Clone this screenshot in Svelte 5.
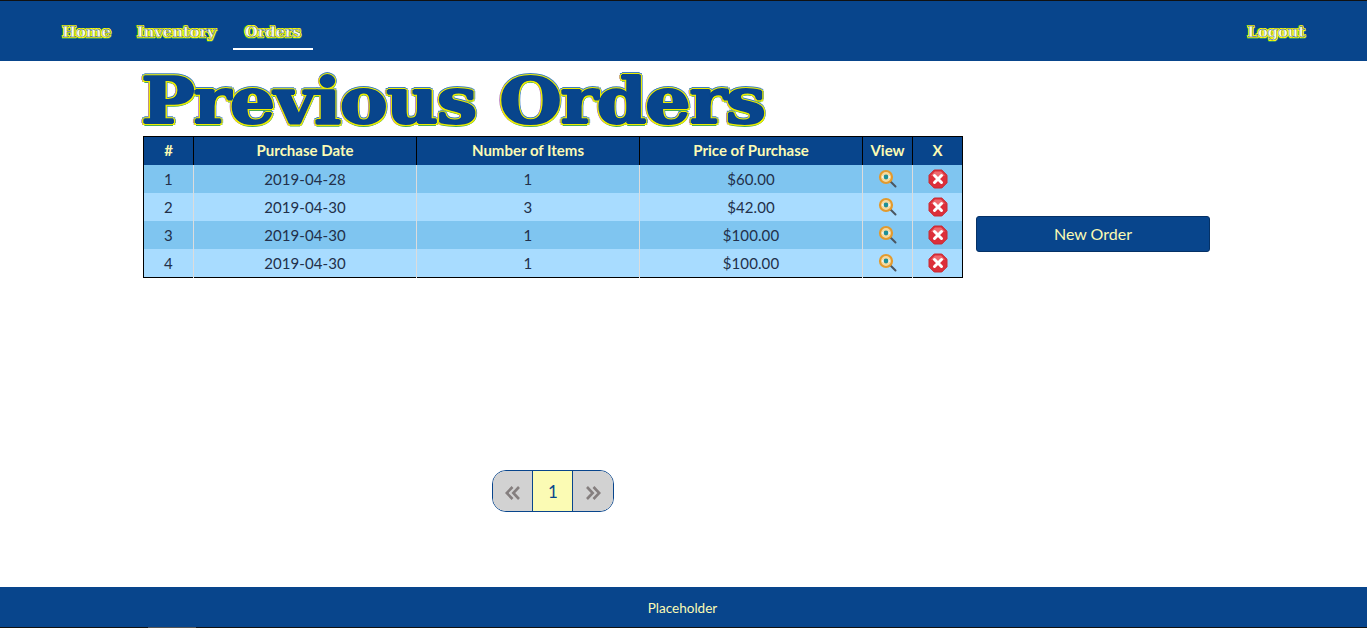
<script>
  const rows = [
    { n: 1, date: '2019-04-28', items: 1, price: '$60.00' },
    { n: 2, date: '2019-04-30', items: 3, price: '$42.00' },
    { n: 3, date: '2019-04-30', items: 1, price: '$100.00' },
    { n: 4, date: '2019-04-30', items: 1, price: '$100.00' }
  ];
</script>

<div class="page">
  <nav class="nav">
    <div class="links">
      <a class="link">Home</a>
      <a class="link">Inventory</a>
      <a class="link active">Orders</a>
    </div>
    <a class="link logout">Logout</a>
  </nav>

  <main class="main">
    <h1 class="title">Previous Orders</h1>
    <div class="content">
      <table class="table">
        <thead>
          <tr>
            <th class="c-n">#</th>
            <th class="c-w">Purchase Date</th>
            <th class="c-w">Number of Items</th>
            <th class="c-w">Price of Purchase</th>
            <th class="c-i">View</th>
            <th class="c-i">X</th>
          </tr>
        </thead>
        <tbody>
          {#each rows as r}
            <tr>
              <td>{r.n}</td>
              <td>{r.date}</td>
              <td>{r.items}</td>
              <td>{r.price}</td>
              <td>
                <svg class="icon" width="20" height="20" viewBox="0 0 20 20">
                  <path d="M12.5 12.5 L17.5 17.5" stroke="#4a5560" stroke-width="2" stroke-linecap="round" />
                  <circle cx="8" cy="8" r="6" fill="#f4d9a0" stroke="#e39a2d" stroke-width="2.2" />
                  <path d="M3.5 8 Q8 3.8 12.5 8 Q8 12 3.5 8Z" fill="#fff" />
                  <circle cx="8" cy="8" r="2.4" fill="#1f8f95" />
                </svg>
              </td>
              <td>
                <svg class="icon" width="20" height="20" viewBox="0 0 20 20">
                  <path d="M6.2 1H13.8L19 6.2V13.8L13.8 19H6.2L1 13.8V6.2Z" fill="#dc2f3a" stroke="#c92a33" stroke-width="1" stroke-linejoin="round" />
                  <path d="M3 6.5 L7 2.5 H13 L17 6.5 Q10 9 3 6.5Z" fill="#ee6a6f" />
                  <path d="M6.5 6.5 L13.5 13.5 M13.5 6.5 L6.5 13.5" stroke="#fff" stroke-width="3" stroke-linecap="round" />
                </svg>
              </td>
            </tr>
          {/each}
        </tbody>
      </table>
      <button class="new-order">New Order</button>
    </div>

    <div class="pager">
      <span class="page-btn side first">
        <svg width="16" height="16" viewBox="0 0 16 16" fill="none" stroke="#857f7f" stroke-width="2.6">
          <path d="M7.5 2 L1.8 8 L7.5 14 M14 2 L8.3 8 L14 14" />
        </svg>
      </span>
      <span class="page-btn current">1</span>
      <span class="page-btn side">
        <svg width="16" height="16" viewBox="0 0 16 16" fill="none" stroke="#857f7f" stroke-width="2.6">
          <path d="M2 2 L7.7 8 L2 14 M8.5 2 L14.2 8 L8.5 14" />
        </svg>
      </span>
    </div>
  </main>

  <footer class="footer">
    <span>Placeholder</span>
    <i class="edge"></i>
  </footer>
</div>

<style>
  :global(body) {
    margin: 0;
    background: #fff;
  }
  .page {
    height: 628px;
    display: flex;
    flex-direction: column;
    overflow: hidden;
    font-family: "Lato", "Open Sans", sans-serif;
  }
  .nav {
    height: 60px;
    border-top: 1px solid #111;
    background: #08458c;
    display: flex;
    justify-content: space-between;
    align-items: flex-start;
    padding: 0 50px 0 51px;
    box-sizing: content-box;
  }
  .links {
    display: flex;
    gap: 4px;
  }
  .link {
    font-family: "DejaVu Serif", serif;
    font-weight: 700;
    font-size: 15px;
    color: #fbfcec;
    -webkit-text-stroke: 0.35px #0c3f70;
    text-shadow: 1px 0 0 #ffff00, -1px 0 0 #ffff00, 0 1px 0 #ffff00, 0 -1px 0 #ffff00,
      0.8px 0.8px 0 #ffff00, -0.8px -0.8px 0 #ffff00, 0.8px -0.8px 0 #ffff00, -0.8px 0.8px 0 #ffff00,
      1.8px 0.8px 0 #2f8a70, -1.8px -0.8px 0 #2f8a70, 0.8px 1.8px 0 #2f8a70, -0.8px 1.8px 0 #2f8a70;
    padding: 15px 11px 0;
    height: 49px;
    box-sizing: border-box;
    border-bottom: 2px solid transparent;
    display: flex;
    align-items: center;
    letter-spacing: -0.2px;
  }
  .link.active {
    border-bottom-color: #fff;
    margin-left: 2px;
    padding-left: 12px;
    padding-right: 12px;
  }
  .logout {
    padding-right: 12px;
  }
  .main {
    flex: 1;
    padding-left: 143px;
    min-height: 0;
  }
  .title {
    margin: 0 0 0 -2px;
    height: 75px;
    line-height: 79px;
    font-family: "DejaVu Serif", serif;
    font-weight: 700;
    font-size: 64px;
    letter-spacing: -1.3px;
    color: #08458c;
    white-space: nowrap;
    transform: scaleX(1.12);
    transform-origin: left center;
    text-shadow: 1px 0 0 #08458c, -1px 0 0 #08458c, 0 1px 0 #08458c, 0 -1px 0 #08458c,
      2px 0 0 #ecec00, -2px 0 0 #ecec00, 0 2px 0 #ecec00, 0 -2px 0 #ecec00,
      1.5px 1.5px 0 #ecec00, -1.5px -1.5px 0 #ecec00, 1.5px -1.5px 0 #ecec00, -1.5px 1.5px 0 #ecec00,
      2.6px 0 0 #4e8ad0, -2.6px 0 0 #b070b8, 0 2.6px 0 #4caf50, 0 -2.6px 0 #3c7fc0,
      1.9px 1.9px 0 #4caf50, -1.9px -1.9px 0 #3c7fc0, 1.9px -1.9px 0 #4e8ad0, -1.9px 1.9px 0 #b070b8;
  }
  .content {
    display: flex;
    align-items: flex-start;
    gap: 13px;
  }
  .table {
    width: 820px;
    table-layout: fixed;
    border-collapse: collapse;
    border: 1px solid #000;
    font-size: 15px;
  }
  th {
    height: 28px;
    padding: 0 0 2px;
    background: #08458c;
    color: #fbfbb4;
    font-size: 15px;
    font-weight: 700;
    border-left: 1px solid #000;
    box-sizing: border-box;
  }
  th:first-child, td:first-child {
    border-left: 0;
  }
  .c-n { width: 50px; }
  .c-w { width: 223px; }
  .c-i { width: 50px; }
  td {
    height: 28px;
    padding: 0;
    text-align: center;
    color: #22304a;
    letter-spacing: 0.1px;
    border-left: 1px solid #dcdcdc;
    box-sizing: border-box;
  }
  tbody tr:last-child td { height: 29px; }
  tbody tr:nth-child(odd) td { background: #7fc5f0; }
  tbody tr:nth-child(even) td { background: #a8dcff; }
  .icon {
    display: block;
    margin: 0 auto;
  }
  .new-order {
    width: 234px;
    height: 36px;
    margin-top: 80px;
    padding: 0 0 2px;
    background: #08458c;
    color: #fbfbb4;
    border: 1px solid #053166;
    border-radius: 3px;
    font-family: inherit;
    font-size: 16px;
  }
  .pager {
    width: 122px;
    height: 42px;
    margin: 192px 0 0 349px;
    box-sizing: border-box;
    display: flex;
    border: 1px solid #08458c;
    border-radius: 14px;
    overflow: hidden;
  }
  .page-btn {
    flex: 0 0 40px;
    display: flex;
    align-items: center;
    justify-content: center;
    box-sizing: border-box;
  }
  .side {
    background: #d2d2d2;
    padding-top: 4px;
  }
  .first {
    flex-basis: 39px;
  }
  .current {
    flex-basis: 41px;
    background: #fbfbb4;
    color: #08458c;
    border-left: 1px solid #08458c;
    border-right: 1px solid #08458c;
    font-size: 17px;
    padding-left: 1px;
  }
  .footer {
    background: #08458c;
    border-bottom: 1px solid #111;
    display: flex;
    align-items: center;
    justify-content: center;
    color: #fbfbb4;
    font-size: 13.5px;
    padding: 1px 2px 0 0;
    box-sizing: content-box;
    height: 39px;
    position: relative;
  }
  .edge {
    position: absolute;
    left: 148px;
    bottom: -1px;
    width: 48px;
    height: 1px;
    background: #555;
  }
</style>
